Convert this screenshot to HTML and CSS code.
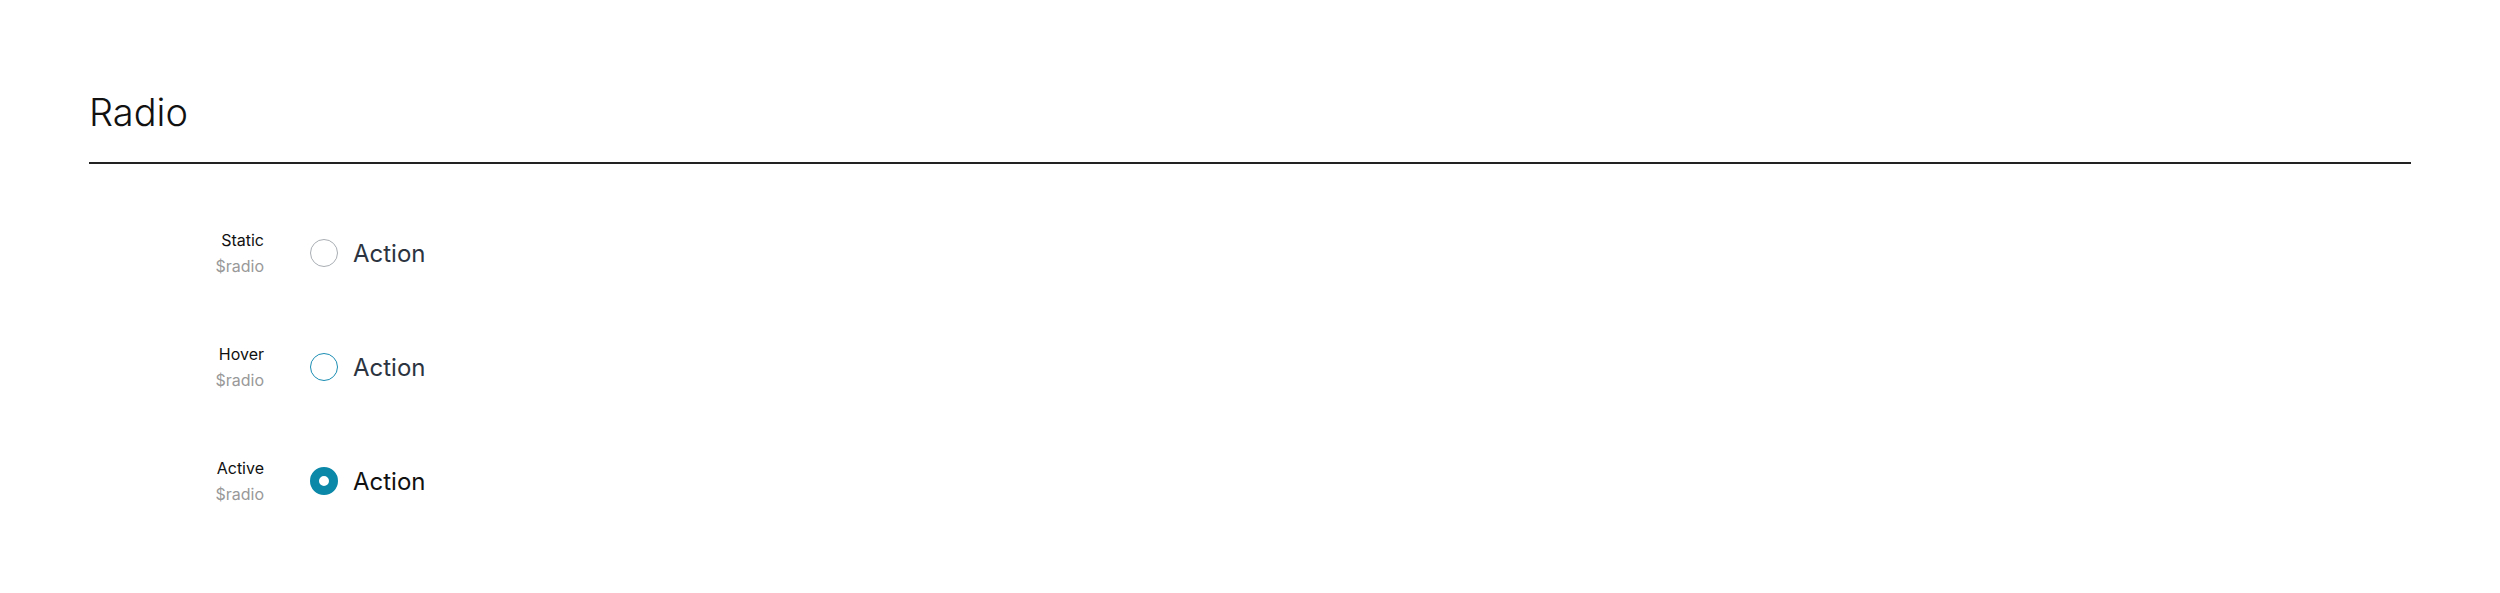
FILE: index.html
```html
<!DOCTYPE html>
<html lang="en">
<head>
    <meta charset="UTF-8">
    <title>Radio</title>
    <link rel="stylesheet" href="styles.css">
</head>
<body>
<div class="page">
    <div class="section-header">
        <h1>Radio</h1>
    </div>

    <div class="states">
        <!-- Static -->
        <div class="state-row">
            <div class="state-label">
                <span class="state-name">Static</span>
                <span class="state-token">$radio</span>
            </div>
            <label class="radio">
                <span class="radio-circle"></span>
                <span class="radio-text">Action</span>
            </label>
        </div>

        <!-- Hover -->
        <div class="state-row">
            <div class="state-label">
                <span class="state-name">Hover</span>
                <span class="state-token">$radio</span>
            </div>
            <label class="radio hover">
                <span class="radio-circle"></span>
                <span class="radio-text">Action</span>
            </label>
        </div>

        <!-- Active -->
        <div class="state-row">
            <div class="state-label">
                <span class="state-name">Active</span>
                <span class="state-token">$radio</span>
            </div>
            <label class="radio active">
                <span class="radio-circle"></span>
                <span class="radio-text">Action</span>
            </label>
        </div>
    </div>
</div>
</body>
</html>
```

FILE: styles.css
```css
* {
    margin: 0;
    padding: 0;
    box-sizing: border-box;
}

body {
    font-family: Inter, 'Noto Sans', sans-serif;
    background: #fff;
    color: #111;
}

.page {
    padding: 89px 89px 0;
}

.section-header {
    border-bottom: 2px solid #222;
    padding-bottom: 27px;
}

.section-header h1 {
    font-size: 38px;
    font-weight: 300;
    line-height: 46px;
    color: #111;
}

.states {
    padding-top: 32px;
}

.state-row {
    display: grid;
    grid-template-columns: 175px auto;
    column-gap: 46px;
    align-items: center;
    height: 114px;
}

.state-label {
    display: flex;
    flex-direction: column;
    align-items: flex-end;
    font-size: 16px;
    line-height: 26px;
}

.state-name {
    color: #111;
}

.state-token {
    color: #999;
}

.radio {
    display: flex;
    align-items: center;
    gap: 15px;
}

.radio-circle {
    width: 28px;
    height: 28px;
    border-radius: 50%;
    border: 1.5px solid #a9aeb3;
    background: #fff;
}

.radio-text {
    font-size: 24px;
    color: #2b3440;
}

.radio.hover .radio-circle {
    border-color: #1a8db3;
}

.radio.active .radio-circle {
    border: 9px solid #0b87a8;
}

.radio.active .radio-text {
    color: #111;
}
```
